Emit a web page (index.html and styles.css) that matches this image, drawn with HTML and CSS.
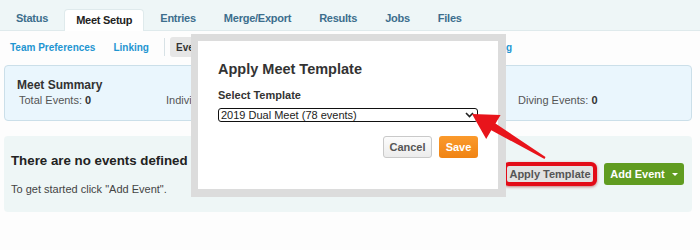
FILE: index.html
```html
<!DOCTYPE html>
<html lang="en">
<head>
    <meta charset="UTF-8">
    <meta name="viewport" content="width=device-width, initial-scale=1.0">
    <title>Meet Setup</title>
    <link rel="stylesheet" href="styles.css">
</head>
<body>
    <div class="tab-bar">
        <a class="tab">Status</a>
        <a class="tab active">Meet Setup</a>
        <a class="tab">Entries</a>
        <a class="tab">Merge/Export</a>
        <a class="tab">Results</a>
        <a class="tab">Jobs</a>
        <a class="tab">Files</a>
    </div>

    <div class="sub-nav">
        <a class="sub-link">Team Preferences</a>
        <a class="sub-link">Linking</a>
        <span class="sub-divider"></span>
        <a class="sub-link current">Events</a>
        <a class="sub-link">Sessions</a>
        <a class="sub-link">Divisions</a>
        <a class="sub-link">Relay Setup</a>
        <a class="sub-link">Event Numbering</a>
    </div>

    <div class="content">
        <div class="summary">
            <h3>Meet Summary</h3>
            <div class="summary-stats">
                <span>Total Events: <b>0</b></span>
                <span>Individual Events: <b>0</b></span>
                <span>Relay Events: <b>0</b></span>
                <span>Diving Events: <b>0</b></span>
            </div>
        </div>

        <div class="events-panel">
            <div class="events-empty">
                <h2>There are no events defined</h2>
                <p>To get started click "Add Event".</p>
            </div>
            <div class="events-actions">
                <button class="btn btn-light callout">Apply Template</button>
                <button class="btn btn-green">Add Event <span class="caret"></span></button>
            </div>
        </div>
    </div>

    <!-- Apply template dialog -->
    <div class="modal">
        <h2 class="modal-title">Apply Meet Template</h2>
        <label class="field-label">Select Template</label>
        <div class="select-box">
            <span>2019 Dual Meet (78 events)</span>
            <svg width="9" height="6" viewBox="0 0 9 6"><path d="M1 1 L4.5 4.5 L8 1" fill="none" stroke="#222" stroke-width="1.6"/></svg>
        </div>
        <div class="modal-buttons">
            <button class="btn btn-cancel">Cancel</button>
            <button class="btn btn-orange">Save</button>
        </div>
    </div>

    <!-- Annotation arrow -->
    <svg class="callout-arrow" width="700" height="250" viewBox="0 0 700 250">
        <polygon points="472,114 500.6,114.9 495.5,123.5 545.5,157.1 544.5,158.9 491.3,130.3 486.2,138.9" fill="#e8141b"/>
    </svg>
</body>
</html>
```

FILE: styles.css
```css
* {
    box-sizing: border-box;
    margin: 0;
    padding: 0;
    font-family: "Liberation Sans", Arial, sans-serif;
}

body {
    background-color: #fdfdfd;
    width: 700px;
    height: 250px;
    overflow: hidden;
}

.tab-bar {
    display: flex;
    align-items: flex-end;
    gap: 4px;
    height: 31px;
    padding-left: 4px;
    background-color: #eef6f7;
    border-bottom: 1px solid #dfeaec;
}

.tab {
    display: flex;
    align-items: center;
    height: 22px;
    padding: 0 12px 2px;
    font-size: 11px;
    font-weight: bold;
    letter-spacing: -0.25px;
    color: #3c6e8d;
}

.tab.active {
    height: 22px;
    margin-bottom: -1px;
    background-color: #fff;
    border: 1px solid #dfeaec;
    border-bottom: none;
    border-radius: 4px 4px 0 0;
    padding: 0 11px 1px;
    color: #222;
}

.sub-nav {
    display: flex;
    align-items: center;
    gap: 6px;
    height: 20px;
    margin-top: 6px;
    padding-left: 4px;
}

.sub-link {
    display: flex;
    align-items: center;
    height: 20px;
    padding: 0 6px;
    font-size: 10px;
    font-weight: bold;
    color: #1f95d1;
}

.sub-link.current {
    background-color: #e6e6e6;
    border-radius: 3px;
    color: #333;
}

.sub-link:last-child {
    margin-left: 3px;
}

.sub-divider {
    width: 1px;
    height: 18px;
    margin: 0 -1px 0 3px;
    background-color: #d8e2e6;
}

.content {
    margin: 8px 8px 0 4px;
}

.summary {
    height: 56px;
    padding: 12px 12px 0;
    background-color: #eaf6fd;
    border: 1px solid #cbdfe9;
    border-radius: 4px;
}

.summary h3 {
    font-size: 12px;
    line-height: 14px;
    color: #333;
}

.summary-stats {
    display: grid;
    grid-template-columns: 147px 176px 176px auto;
    margin-top: 2px;
    padding-left: 2px;
    font-size: 11px;
    line-height: 13px;
    color: #555;
}

.summary-stats b {
    color: #333;
}

.events-panel {
    display: flex;
    justify-content: space-between;
    align-items: center;
    height: 76px;
    margin-top: 15px;
    padding: 0 8px 0 7px;
    background-color: #eef6f6;
    border-radius: 4px;
}

.events-empty h2 {
    font-size: 13.3px;
    line-height: 16px;
    color: #222;
    margin-bottom: 14px;
}

.events-empty p {
    font-size: 11px;
    line-height: 13px;
    color: #444;
}

.events-actions {
    display: flex;
    align-items: center;
    gap: 7px;
}

.btn {
    display: flex;
    align-items: center;
    justify-content: center;
    height: 22px;
    padding: 0 6px;
    border: none;
    border-radius: 3px;
    font-size: 11px;
    font-weight: bold;
    cursor: pointer;
}

.btn-light {
    background-color: #e2e2e2;
    color: #555;
}

.callout {
    width: 94px;
    height: 24px;
    border: 4px solid #e30b17;
    border-radius: 6px;
    box-shadow: 0 1px 3px rgba(160, 0, 0, 0.5);
    padding: 0;
}

.btn-green {
    width: 80px;
    background-color: #609c20;
    color: #fff;
    padding: 0 6px;
    gap: 7px;
}

.caret {
    width: 0;
    height: 0;
    border-left: 3px solid transparent;
    border-right: 3px solid transparent;
    border-top: 3px solid #fff;
}

.modal {
    position: absolute;
    left: 191px;
    top: 34px;
    width: 315px;
    height: 163px;
    padding: 20px;
    background-color: #fff;
    border: 7px solid #dcdcdc;
    border-right-width: 8px;
    border-bottom-width: 8px;
}

.modal-title {
    font-size: 14.5px;
    line-height: 17px;
    color: #333;
}

.field-label {
    display: block;
    margin-top: 11px;
    font-size: 11px;
    font-weight: bold;
    line-height: 13px;
    color: #333;
}

.select-box {
    display: flex;
    align-items: center;
    justify-content: space-between;
    height: 14px;
    margin-top: 6px;
    padding: 0 3px 0 2px;
    border: 1.5px solid #111;
    border-radius: 3px;
    font-size: 11px;
    color: #222;
}

.modal-buttons {
    display: flex;
    justify-content: flex-end;
    gap: 7px;
    margin-top: 14px;
}

.btn-cancel {
    width: 49px;
    background: linear-gradient(#fcfcfc, #ececec);
    border: 1px solid #c9c9c9;
    color: #555;
}

.btn-orange {
    width: 39px;
    background: linear-gradient(#fb9a2c, #f08313);
    color: #fff;
}

.callout-arrow {
    position: absolute;
    left: 0;
    top: 0;
    pointer-events: none;
}
```
